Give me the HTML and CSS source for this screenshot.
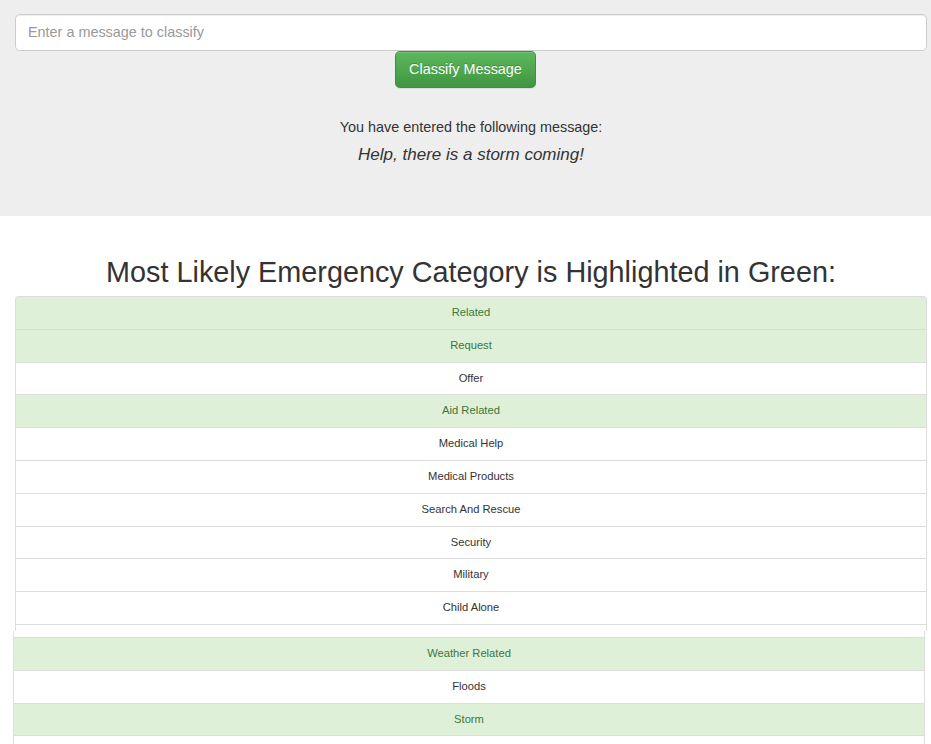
FILE: index.html
```html
<!DOCTYPE html>
<html lang="en">
<head>
<meta charset="utf-8">
<title>Disaster Response Message Classifier</title>
<link rel="stylesheet" href="styles.css">
</head>
<body>
<section class="band">
  <form class="form">
    <input class="msg-input" type="text" placeholder="Enter a message to classify">
    <div class="btn-row">
      <button type="button" class="btn-success">Classify Message</button>
    </div>
  </form>
  <div class="entered">
    <p class="entered-label">You have entered the following message:</p>
    <p class="entered-msg">Help, there is a storm coming!</p>
  </div>
</section>

<h1 class="title">Most Likely Emergency Category is Highlighted in Green:</h1>

<div class="pane pane-a">
  <ul class="list-group">
    <li class="item ok">Related</li>
    <li class="item ok">Request</li>
    <li class="item">Offer</li>
    <li class="item ok">Aid Related</li>
    <li class="item">Medical Help</li>
    <li class="item">Medical Products</li>
    <li class="item">Search And Rescue</li>
    <li class="item">Security</li>
    <li class="item">Military</li>
    <li class="item">Child Alone</li>
    <li class="item blank"></li>
  </ul>
</div>
<div class="pane pane-b">
  <ul class="list-group shifted">
    <li class="item blank"></li>
    <li class="item ok">Weather Related</li>
    <li class="item">Floods</li>
    <li class="item ok">Storm</li>
    <li class="item blank"></li>
  </ul>
</div>
</body>
</html>
```

FILE: styles.css
```css
html, body {
  margin: 0;
  padding: 0;
  background: #fff;
  overflow: hidden;
}
body {
  font-family: "Liberation Sans", Arial, Helvetica, sans-serif;
  color: #333;
  font-size: 11.2px;
  line-height: 1.43;
}

.band {
  background: #eeeeee;
  padding: 14px 0 49px;
}

.form {
  display: flex;
  flex-direction: column;
}

.msg-input {
  box-sizing: border-box;
  margin-left: 15px;
  width: 912px;
  height: 36.8px;
  padding: 8px 12px;
  font-family: inherit;
  font-size: 14.4px;
  line-height: 19.2px;
  color: #555;
  background: #fff;
  border: 1px solid #ccc;
  border-radius: 4.8px;
  box-shadow: inset 0 1px 1px rgba(0,0,0,.075);
  outline: none;
}
.msg-input::placeholder {
  color: #999;
}

.btn-row {
  display: flex;
  justify-content: center;
}

.btn-success {
  box-sizing: border-box;
  height: 36.8px;
  padding: 8px 12.8px;
  font-family: inherit;
  font-size: 14.4px;
  line-height: 19.2px;
  color: #fff;
  border: 1px solid #3e8f3e;
  border-radius: 4.8px;
  background-color: #5cb85c;
  background-image: linear-gradient(to bottom, #5cb85c 0, #419641 100%);
  text-shadow: 0 -1px 0 rgba(0,0,0,.2);
  box-shadow: inset 0 1px 0 rgba(255,255,255,.15), 0 1px 1px rgba(0,0,0,.075);
  cursor: pointer;
}

.entered {
  margin-left: 15px;
  width: 912px;
  text-align: center;
  padding-top: 29.5px;
}
.entered p {
  margin: 0;
}
.entered-label {
  font-size: 14.4px;
  line-height: 20px;
}
.entered-msg {
  margin-top: 6px !important;
  font-size: 17px;
  line-height: 24px;
  font-style: italic;
}

.title {
  margin: 41px 0 7.3px 15px;
  width: 912px;
  text-align: center;
  font-size: 28.8px;
  font-weight: 400;
  line-height: 1.1;
  color: #333;
}

.pane {
  width: 912px;
  overflow: hidden;
}
.pane-a {
  margin-left: 15px;
  height: 335px;
}
.pane-b {
  margin-left: 13px;
  height: 113px;
}

.list-group {
  list-style: none;
  margin: 0;
  padding: 0;
}
.shifted {
  margin-top: -26.8px;
}

.item {
  box-sizing: border-box;
  padding: 8px 12px;
  line-height: 15.8px;
  font-size: 11.2px;
  text-align: center;
  background: #fff;
  color: #333;
  border: 1px solid #ddd;
  margin-bottom: -1px;
}
.item.blank {
  height: 33.8px;
}
.pane-a .item:first-child {
  border-top-left-radius: 3.2px;
  border-top-right-radius: 3.2px;
}
.item.ok {
  background: #dff0d8;
  color: #3c763d;
}
```
